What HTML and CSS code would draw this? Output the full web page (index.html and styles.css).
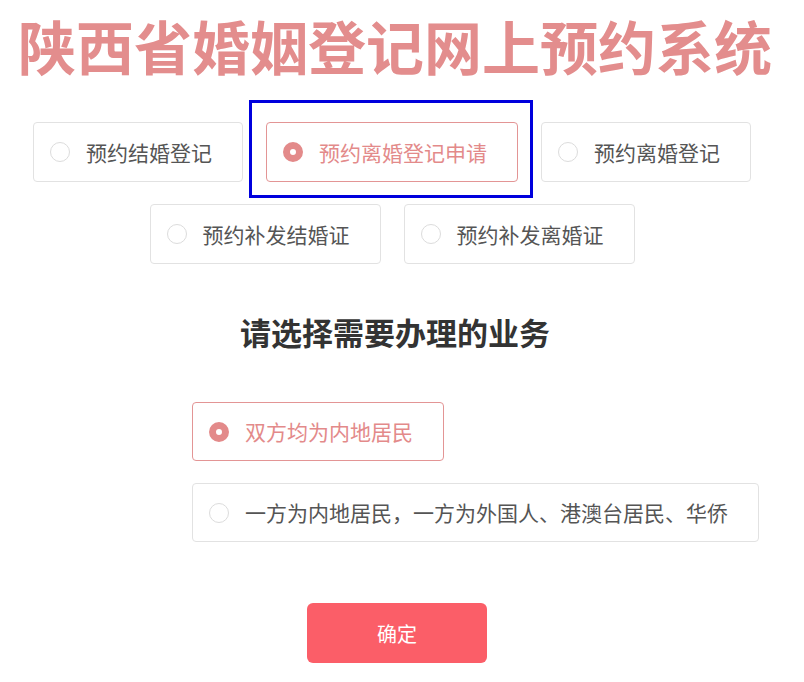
FILE: index.html
```html
<!DOCTYPE html>
<html lang="zh-CN">
  <head>
    <meta charset="UTF-8" />
    <meta name="viewport" content="width=device-width, initial-scale=1" />
    <title>陕西省婚姻登记网上预约系统</title>
    <link rel="stylesheet" href="styles.css">
  </head>
  <body>
    <div class="page">
      <h1 class="title">陕西省婚姻登记网上预约系统</h1>

      <div class="options">
        <label class="option">
          <span class="radio"></span>
          <span class="option-text">预约结婚登记</span>
        </label>
        <label class="option checked highlight">
          <span class="radio"></span>
          <span class="option-text">预约离婚登记申请</span>
        </label>
        <label class="option">
          <span class="radio"></span>
          <span class="option-text">预约离婚登记</span>
        </label>
        <label class="option">
          <span class="radio"></span>
          <span class="option-text">预约补发结婚证</span>
        </label>
        <label class="option">
          <span class="radio"></span>
          <span class="option-text">预约补发离婚证</span>
        </label>
      </div>

      <h2 class="subtitle">请选择需要办理的业务</h2>

      <div class="sub-options">
        <label class="option checked">
          <span class="radio"></span>
          <span class="option-text">双方均为内地居民</span>
        </label>
        <label class="option">
          <span class="radio"></span>
          <span class="option-text">一方为内地居民，一方为外国人、港澳台居民、华侨</span>
        </label>
      </div>

      <div class="actions">
        <button type="button" class="submit">确定</button>
      </div>
    </div>
  </body>
</html>
```

FILE: styles.css
```css
body {
  margin: 0;
  font-family: "Noto Sans CJK SC", "Noto Sans", sans-serif;
  background: #ffffff;
  color: #555;
}

.page {
  width: 790px;
  padding-top: 16px;
}

.title {
  margin: 0;
  font-size: 58px;
  line-height: 58px;
  font-weight: bold;
  text-align: center;
  color: #e38d8d;
  white-space: nowrap;
}

.options {
  display: flex;
  flex-wrap: wrap;
  justify-content: center;
  gap: 22px 23px;
  margin-top: 48px;
  padding-right: 6px;
}

.option {
  position: relative;
  display: inline-flex;
  align-items: center;
  gap: 16px;
  box-sizing: border-box;
  height: 60px;
  padding: 0 30px 0 16px;
  border: 1px solid #e2e2e2;
  border-radius: 4px;
  font-size: 21px;
  line-height: 1;
  color: #555;
  cursor: pointer;
  white-space: nowrap;
}

.radio {
  box-sizing: border-box;
  width: 20px;
  height: 20px;
  border: 1px solid #dcdcdc;
  border-radius: 50%;
  background: #fff;
  flex-shrink: 0;
}

.option.checked {
  border-color: #e39595;
  color: #e38a8a;
}

.option.checked .radio {
  border: 7px solid #e38a8a;
}

.option.highlight::after {
  content: "";
  position: absolute;
  left: -18px;
  top: -23px;
  width: 284px;
  height: 98px;
  box-sizing: border-box;
  border: 3px solid #0000dd;
  pointer-events: none;
}

.subtitle {
  margin: 52px 0 0;
  font-size: 31px;
  line-height: 31px;
  font-weight: bold;
  text-align: center;
  color: #333;
}

.sub-options {
  display: flex;
  flex-direction: column;
  align-items: flex-start;
  gap: 22px;
  margin: 55px 0 0 192px;
}

.sub-options .option {
  height: 59px;
}

.actions {
  display: flex;
  justify-content: center;
  margin-top: 61px;
  padding-left: 4px;
}

.submit {
  width: 180px;
  height: 60px;
  border: none;
  border-radius: 6px;
  background: #fb5e68;
  color: #fff;
  font-family: inherit;
  font-size: 20px;
  cursor: pointer;
}
```
